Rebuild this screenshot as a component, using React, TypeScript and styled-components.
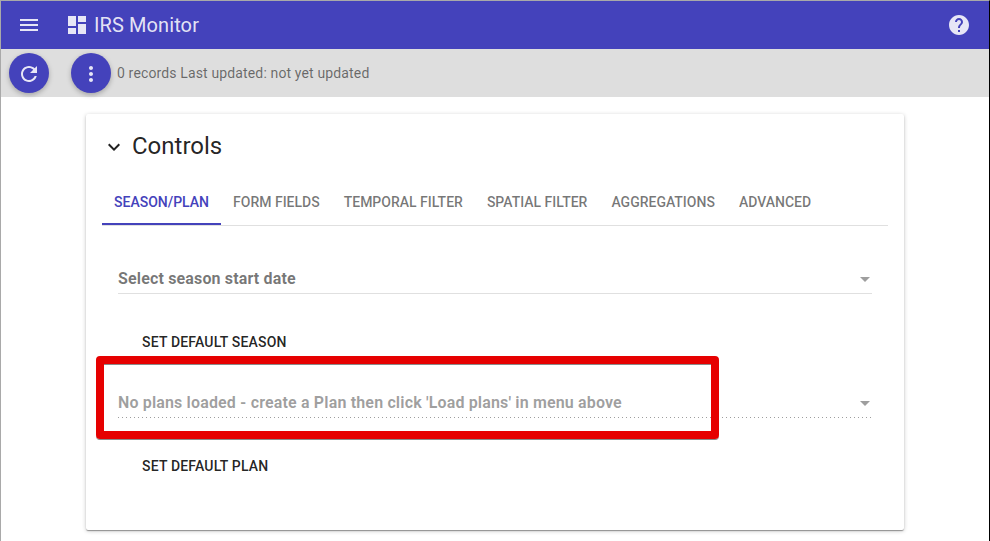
import React from "react";
import styled, { createGlobalStyle } from "styled-components";

const GlobalStyle = createGlobalStyle`
  *, *::before, *::after { box-sizing: border-box; }
  body {
    margin: 0;
    background: #fff;
    font-family: Roboto, "Liberation Sans", sans-serif;
    -webkit-font-smoothing: antialiased;
  }
  button { font: inherit; letter-spacing: inherit; }
`;

const Window = styled.div`
  height: 541px;
  overflow: hidden;
  display: flex;
  flex-direction: column;
  border-top: 1px solid #a9a9a9;
  border-left: 1px solid #a9a9a9;
  border-right: 1px solid #000;
`;

const Toolbar = styled.header`
  flex: none;
  height: 48px;
  display: flex;
  align-items: center;
  padding: 0 18px 0 16px;
  background: #4442bb;
  color: rgba(255, 255, 255, 0.87);
`;

const Brand = styled.h1`
  flex: 1;
  display: flex;
  align-items: center;
  gap: 5px;
  margin: 0 0 0 24px;
  font-size: 20px;
  font-weight: 400;
  line-height: 24px;
  letter-spacing: 0.005em;
`;

const Icon = styled.svg`
  display: block;
  flex: none;
  width: 24px;
  height: 24px;
  fill: currentColor;
`;

const StatusBar = styled.div`
  flex: none;
  height: 48px;
  display: flex;
  align-items: center;
  padding-left: 8px;
  background: #dedede;
`;

const RoundButton = styled.button`
  width: 40px;
  height: 40px;
  padding: 2px 0 0;
  margin-right: 22px;
  border: 0;
  border-radius: 50%;
  display: flex;
  align-items: center;
  justify-content: center;
  background: #4442bb;
  color: rgba(255, 255, 255, 0.87);
  box-shadow: 0 2px 5px rgba(0, 0, 0, 0.26);
`;

const StatusText = styled.span`
  margin-left: -16px;
  font-size: 14px;
  line-height: 20px;
  letter-spacing: 0.14px;
  color: rgba(0, 0, 0, 0.54);
`;

const Card = styled.main`
  flex: none;
  width: 818px;
  height: 416px;
  margin: 17px 0 0 85px;
  padding: 16px;
  border-radius: 2px;
  background: #fff;
  box-shadow: 0 1px 4px rgba(0, 0, 0, 0.22), 0 1px 1px rgba(0, 0, 0, 0.24),
    0 2px 1px -1px rgba(0, 0, 0, 0.14);
`;

const CardTitle = styled.h2`
  display: flex;
  align-items: center;
  height: 32px;
  margin: 0;
  gap: 6px;
  font-size: 24px;
  font-weight: 400;
  line-height: 32px;
  color: rgba(0, 0, 0, 0.87);

  ${Icon} {
    margin-top: 2px;
  }
`;

const Tabs = styled.nav`
  display: flex;
  height: 48px;
  margin-top: 16px;
  border-bottom: 1px solid #e0e0e0;
`;

const Tab = styled.button<{ $active?: boolean }>`
  height: 47px;
  padding: 2px 12px 0;
  border: 0;
  border-bottom: 2px solid ${(p) => (p.$active ? "#4442bb" : "transparent")};
  background: none;
  white-space: nowrap;
  font-size: 14px;
  font-weight: 500;
  line-height: 20px;
  text-transform: uppercase;
  color: ${(p) => (p.$active ? "#4442bb" : "rgba(0, 0, 0, 0.54)")};
`;

const Panel = styled.section`
  padding: 37px 16px 0;
`;

const Select = styled.div<{ $disabled?: boolean }>`
  display: flex;
  align-items: center;
  justify-content: space-between;
  height: 31px;
  padding: 1px 2px 0 0;
  font-size: 16px;
  font-weight: 700;
  line-height: 20px;
  letter-spacing: 0.15px;
  color: ${(p) => (p.$disabled ? "rgba(0, 0, 0, 0.38)" : "rgba(0, 0, 0, 0.54)")};
  background: ${(p) =>
    p.$disabled
      ? "linear-gradient(to right, #9e9e9e 1px, transparent 1px) 0 100% / 4px 1px repeat-x"
      : "linear-gradient(#e0e0e0, #e0e0e0) 0 100% / 100% 1px no-repeat"};
`;

const Caret = styled.span`
  width: 0;
  height: 0;
  border-left: 5px solid transparent;
  border-right: 5px solid transparent;
  border-top: 5px solid #9e9e9e;
`;

const Highlight = styled.div`
  position: relative;

  &::after {
    content: "";
    position: absolute;
    left: -22px;
    top: -31px;
    width: 623px;
    height: 83px;
    border: 8px solid #e60000;
    border-radius: 4px;
    box-shadow: 0 1px 0 rgba(60, 60, 60, 0.6), inset 0 1px 0 rgba(60, 60, 60, 0.6);
    pointer-events: none;
  }
`;

const FlatButton = styled.button`
  display: block;
  height: 36px;
  margin: 30px 0 27px 16px;
  padding: 0 8px;
  border: 0;
  background: none;
  font-size: 14px;
  font-weight: 500;
  line-height: 36px;
  letter-spacing: 0.18px;
  text-transform: uppercase;
  color: rgba(0, 0, 0, 0.87);
`;

const TABS = ["Season/Plan", "Form fields", "Temporal filter", "Spatial filter", "Aggregations", "Advanced"];

const PATHS = {
  menu: "M3 18h18v-2H3v2zm0-5h18v-2H3v2zm0-7v2h18V6H3z",
  dashboard: "M3 13h8V3H3v10zm0 8h8v-6H3v6zm10 0h8V11h-8v10zm0-18v6h8V3h-8z",
  help: "M12 2C6.48 2 2 6.48 2 12s4.48 10 10 10 10-4.48 10-10S17.52 2 12 2zm1 17h-2v-2h2v2zm2.07-7.75l-.9.92C13.45 12.9 13 13.5 13 15h-2v-.5c0-1.1.45-2.1 1.17-2.83l1.24-1.26c.37-.36.59-.86.59-1.41 0-1.1-.9-2-2-2s-2 .9-2 2H8c0-2.21 1.79-4 4-4s4 1.79 4 4c0 .88-.36 1.68-.93 2.25z",
  refresh: "M17.65 6.35C16.2 4.9 14.21 4 12 4c-4.42 0-7.99 3.58-7.99 8s3.57 8 7.99 8c3.73 0 6.84-2.55 7.73-6h-2.08c-.82 2.33-3.04 4-5.65 4-3.31 0-6-2.69-6-6s2.69-6 6-6c1.66 0 3.14.69 4.22 1.78L13 11h7V4l-2.35 2.35z",
  more: "M12 8c1.1 0 2-.9 2-2s-.9-2-2-2-2 .9-2 2 .9 2 2 2zm0 2c-1.1 0-2 .9-2 2s.9 2 2 2 2-.9 2-2-.9-2-2-2zm0 6c-1.1 0-2 .9-2 2s.9 2 2 2 2-.9 2-2-.9-2-2-2z",
  expand: "M16.59 8.59L12 13.17 7.41 8.59 6 10l6 6 6-6z",
};

function Glyph({ name }: { name: keyof typeof PATHS }) {
  return (
    <Icon viewBox="0 0 24 24" aria-hidden="true">
      <path d={PATHS[name]} />
    </Icon>
  );
}

export default function App() {
  return (
    <>
      <GlobalStyle />
      <Window>
        <Toolbar>
          <Glyph name="menu" />
          <Brand>
            <Glyph name="dashboard" />
            <span>IRS Monitor</span>
          </Brand>
          <Glyph name="help" />
        </Toolbar>
        <StatusBar>
          <RoundButton aria-label="Refresh">
            <Glyph name="refresh" />
          </RoundButton>
          <RoundButton aria-label="More">
            <Glyph name="more" />
          </RoundButton>
          <StatusText>0 records Last updated: not yet updated</StatusText>
        </StatusBar>
        <Card>
          <CardTitle>
            <Glyph name="expand" />
            Controls
          </CardTitle>
          <Tabs>
            {TABS.map((label, i) => (
              <Tab key={label} $active={i === 0}>
                {label}
              </Tab>
            ))}
          </Tabs>
          <Panel>
            <Select>
              Select season start date
              <Caret />
            </Select>
            <FlatButton>Set default season</FlatButton>
            <Highlight>
              <Select $disabled>
                No plans loaded - create a Plan then click 'Load plans' in menu above
                <Caret />
              </Select>
            </Highlight>
            <FlatButton>Set default plan</FlatButton>
          </Panel>
        </Card>
      </Window>
    </>
  );
}
